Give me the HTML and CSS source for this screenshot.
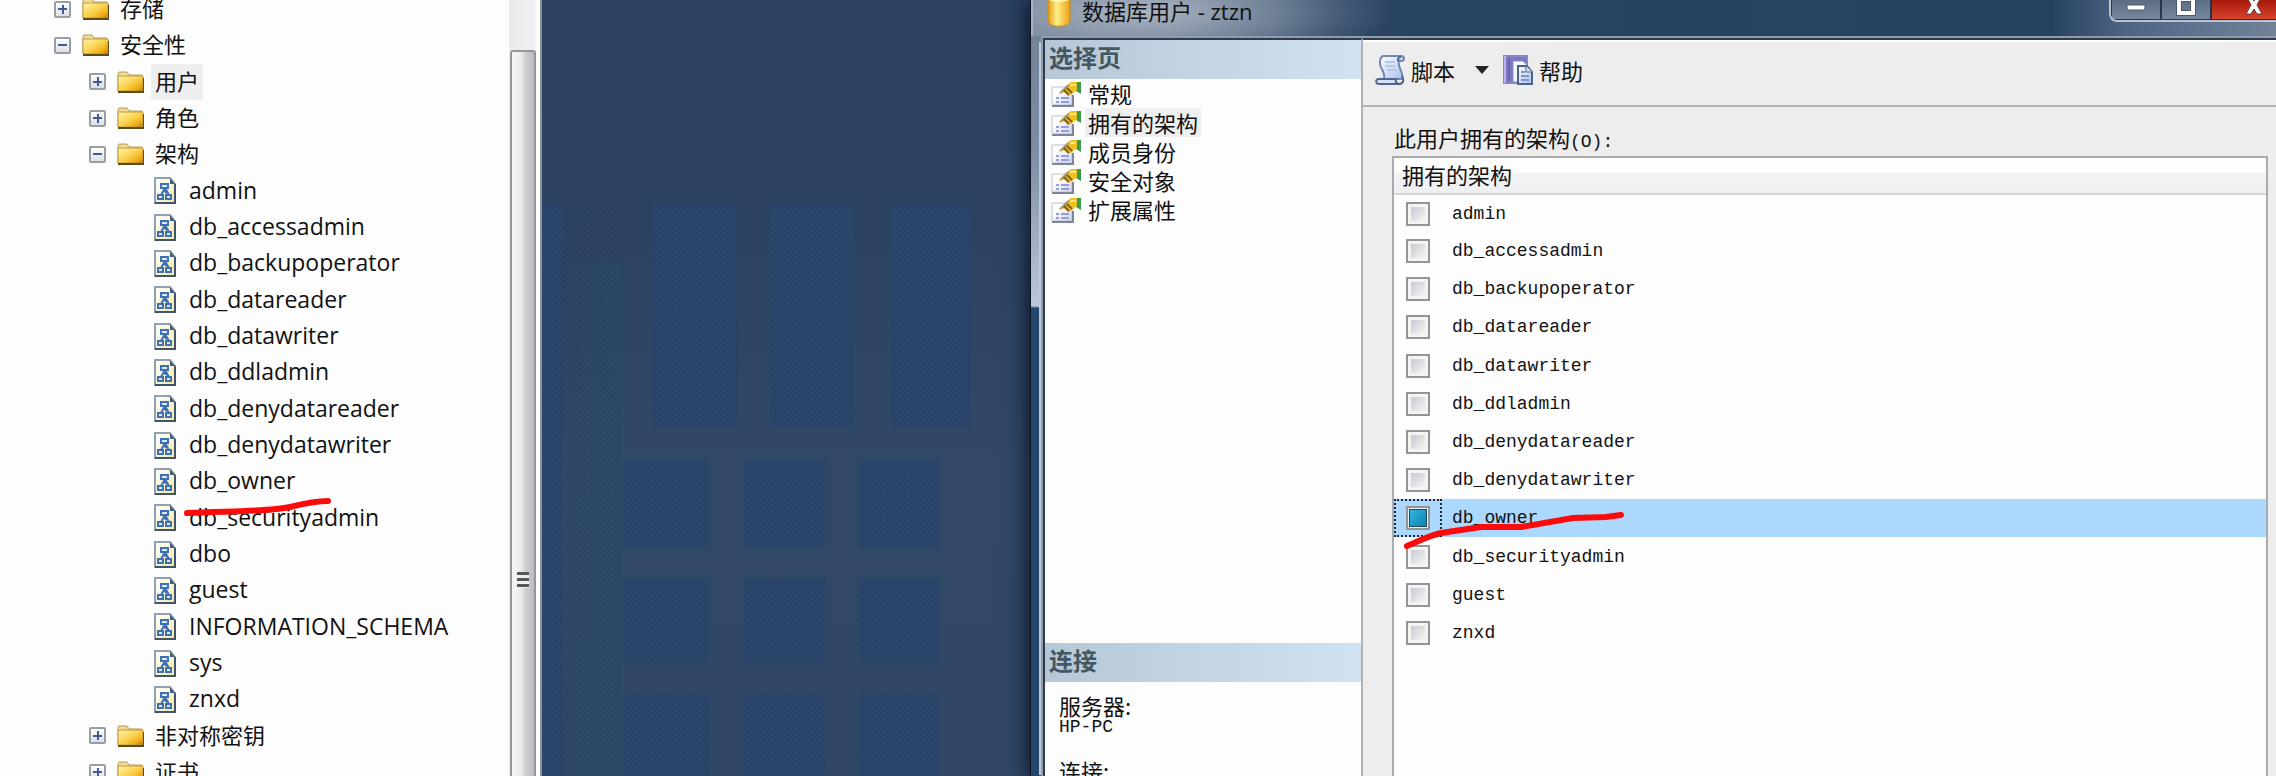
FILE: index.html
```html
<!DOCTYPE html>
<html lang="zh-CN">
<head>
<meta charset="UTF-8">
<meta name="viewport" content="width=device-width, initial-scale=1.0">
<title>数据库用户 - ztzn</title>
<link rel="stylesheet" href="styles.css">
</head>
<body>

<!-- shared icons -->
<svg class="defs" width="0" height="0" aria-hidden="true">
    <defs>
        <linearGradient id="gold" x1="0" y1="0" x2="1" y2="1">
            <stop offset="0" stop-color="#fff3a8"/>
            <stop offset="0.5" stop-color="#fbd250"/>
            <stop offset="0.8" stop-color="#eeaa10"/>
            <stop offset="1" stop-color="#a87408"/>
        </linearGradient>
        <linearGradient id="page" x1="0" y1="0" x2="1" y2="1">
            <stop offset="0" stop-color="#ffffff"/>
            <stop offset="1" stop-color="#f3e9a4"/>
        </linearGradient>
        <linearGradient id="sheet" x1="0" y1="0" x2="1" y2="1">
            <stop offset="0" stop-color="#ffffff"/>
            <stop offset="1" stop-color="#a9bfe8"/>
        </linearGradient>
        <linearGradient id="paper" x1="0" y1="0" x2="1" y2="1">
            <stop offset="0.3" stop-color="#ffffff"/>
            <stop offset="1" stop-color="#ccd4f2"/>
        </linearGradient>
        <linearGradient id="drum" x1="0" y1="0" x2="1" y2="0">
            <stop offset="0" stop-color="#e09a10"/>
            <stop offset="0.4" stop-color="#fff08a"/>
            <stop offset="1" stop-color="#e8a010"/>
        </linearGradient>
    </defs>
    <symbol id="folder" viewBox="0 0 27 22">
        <path d="M1 20V3l1-2h8l2 3h13v16z" fill="#f0dc98" stroke="#b59b58"/>
        <path d="M1 5h25v15H1z" fill="url(#gold)" stroke="#c39a3c"/>
        <path d="M1 21h26V7" fill="none" stroke="#5b4a1c" stroke-width="2"/>
    </symbol>
    <symbol id="schema" viewBox="0 0 22 27">
        <path d="M1 1h15l5 6v19H1z" fill="url(#page)" stroke="#8fa1b2" stroke-width="2"/>
        <path d="M16 1v6h5z" fill="#46607c"/>
        <path d="M21 7v19H1" fill="none" stroke="#43546a" stroke-width="2"/>
        <path d="M11 11l-4 7M11 11l4 7M9 13l4 3" fill="none" stroke="#3f6fb5" stroke-width="2"/>
        <path d="M7 7h7v4H7zM4 18h5v4H4zM12 18h5v4h-5z" fill="#d9ebff" stroke="#3f6fb5" stroke-width="2"/>
    </symbol>
    <symbol id="props" viewBox="0 0 30 26">
        <path d="M1 6h20v18H1z" fill="url(#paper)" stroke="#bcc0cc"/>
        <path d="M1 25h21V14" fill="none" stroke="#80849a" stroke-width="2"/>
        <path d="M5 17h3M5 21h3M10 17h8M10 21h8" stroke="#989dd6" stroke-width="2"/>
        <path d="M25 1h5v12l-5-3z" fill="#3b9a48"/>
        <path d="M8 12l8-8 4-3h6v8l-5 4-4 2-4-4-4 2z" fill="#f2c01d"/>
        <path d="M8 12l8-8 3-1-5 8z" fill="#a39668"/>
        <path d="M13 9l5 5M16 7l5 5" stroke="#7d6218" stroke-width="2"/>
        <path d="M19 4h6" stroke="#ffe680" stroke-width="2"/>
    </symbol>
</svg>

<main class="screen">

    <section class="explorer">
        <ul class="tree">
            <li class="l1"><button class="exp plus" aria-label="展开"></button><svg class="folder"><use href="#folder"/></svg><span>存储</span></li>
            <li class="l1"><button class="exp" aria-label="折叠"></button><svg class="folder"><use href="#folder"/></svg><span>安全性</span></li>
            <li class="l2"><button class="exp plus" aria-label="展开"></button><svg class="folder"><use href="#folder"/></svg><span class="picked">用户</span></li>
            <li class="l2"><button class="exp plus" aria-label="展开"></button><svg class="folder"><use href="#folder"/></svg><span>角色</span></li>
            <li class="l2"><button class="exp" aria-label="折叠"></button><svg class="folder"><use href="#folder"/></svg><span>架构</span></li>
            <li class="l3"><svg class="schema"><use href="#schema"/></svg><span>admin</span></li>
            <li class="l3"><svg class="schema"><use href="#schema"/></svg><span>db_accessadmin</span></li>
            <li class="l3"><svg class="schema"><use href="#schema"/></svg><span>db_backupoperator</span></li>
            <li class="l3"><svg class="schema"><use href="#schema"/></svg><span>db_datareader</span></li>
            <li class="l3"><svg class="schema"><use href="#schema"/></svg><span>db_datawriter</span></li>
            <li class="l3"><svg class="schema"><use href="#schema"/></svg><span>db_ddladmin</span></li>
            <li class="l3"><svg class="schema"><use href="#schema"/></svg><span>db_denydatareader</span></li>
            <li class="l3"><svg class="schema"><use href="#schema"/></svg><span>db_denydatawriter</span></li>
            <li class="l3"><svg class="schema"><use href="#schema"/></svg><span>db_owner</span>
                <svg class="mark mark-tree" viewBox="0 0 150 20" aria-hidden="true"><path d="M3 15C40 13 85 14 106 9C122 5 132 3 144 3"/></svg>
            </li>
            <li class="l3"><svg class="schema"><use href="#schema"/></svg><span>db_securityadmin</span></li>
            <li class="l3"><svg class="schema"><use href="#schema"/></svg><span>dbo</span></li>
            <li class="l3"><svg class="schema"><use href="#schema"/></svg><span>guest</span></li>
            <li class="l3"><svg class="schema"><use href="#schema"/></svg><span>INFORMATION_SCHEMA</span></li>
            <li class="l3"><svg class="schema"><use href="#schema"/></svg><span>sys</span></li>
            <li class="l3"><svg class="schema"><use href="#schema"/></svg><span>znxd</span></li>
            <li class="l2"><button class="exp plus" aria-label="展开"></button><svg class="folder"><use href="#folder"/></svg><span>非对称密钥</span></li>
            <li class="l2"><button class="exp plus" aria-label="展开"></button><svg class="folder"><use href="#folder"/></svg><span>证书</span></li>
        </ul>
        <div class="scrollbar">
            <div class="thumb"><i class="grip"></i></div>
        </div>
    </section>

    <section class="desktop">
        <svg class="wallpaper" viewBox="0 0 488 776" preserveAspectRatio="xMinYMin slice" aria-hidden="true">
            <defs>
                <pattern id="dots" width="6" height="6" patternUnits="userSpaceOnUse">
                    <path d="M0 0h2v2H0zM3 3h2v2H3z" fill="#1f3a5e" opacity="0.35"/>
                </pattern>
                <linearGradient id="haze" x1="0" y1="0" x2="1" y2="0">
                    <stop offset="0" stop-color="#2b4a64" stop-opacity="0.2"/>
                    <stop offset="1" stop-color="#2b4a64" stop-opacity="0.8"/>
                </linearGradient>
            </defs>
            <path d="M24 260h55v516H24z" fill="url(#haze)"/>
            <g fill="#2b456b">
                <path d="M0 203h20v573H0zM110 203h84v221h-84zM226 203h84v221h-84zM347 203h79v221h-79z"/>
                <path d="M81 457h85v87H81zM201 457h80v87h-80zM315 457h80v87h-80z"/>
                <path d="M81 575h85v83H81zM201 575h80v83h-80zM315 575h80v83h-80z"/>
                <path d="M81 690h85v86H81zM201 690h80v86h-80zM315 690h80v86h-80z"/>
            </g>
            <g fill="url(#dots)">
                <path d="M0 203h79v573H0zM110 203h84v221h-84zM226 203h84v221h-84zM347 203h79v221h-79z"/>
                <path d="M81 457h85v87H81zM201 457h80v87h-80zM315 457h80v87h-80z"/>
                <path d="M81 575h85v83H81zM201 575h80v83h-80zM315 575h80v83h-80z"/>
                <path d="M81 690h85v86H81zM201 690h80v86h-80zM315 690h80v86h-80z"/>
            </g>
        </svg>
    </section>

    <section class="dialog">
        <header class="titlebar">
            <svg class="db" viewBox="0 0 24 34"><path d="M1 5v23c0 7 22 7 22 0V5z" fill="url(#drum)" stroke="#c98a14"/><ellipse cx="12" cy="5" rx="11" ry="4" fill="#fff3b0"/></svg>
            <h1>数据库用户 - ztzn</h1>
            <div class="winbtns">
                <button aria-label="最小化"><svg width="20" height="7"><path d="M1 1h18v5H1z" fill="#fff" stroke="#4d5666"/></svg></button>
                <button aria-label="最大化"><svg width="20" height="20"><path d="M3 3h14v14H3z" fill="none" stroke="#4d5666" stroke-width="6"/><path d="M3 3h14v14H3z" fill="none" stroke="#fff" stroke-width="4"/></svg></button>
                <button class="close" aria-label="关闭"><svg width="20" height="20"><path d="M3 1h5l2 4 2-4h5l-4 8 5 9h-5l-3-5-3 5H2l5-9z" fill="#fff" stroke="#6b3a3a"/></svg></button>
            </div>
        </header>

        <div class="client">
            <aside class="sidebar">
                <h2>选择页</h2>
                <ul class="pages">
                    <li><svg><use href="#props"/></svg><a href="#">常规</a></li>
                    <li><svg><use href="#props"/></svg><a href="#" class="current">拥有的架构</a></li>
                    <li><svg><use href="#props"/></svg><a href="#">成员身份</a></li>
                    <li><svg><use href="#props"/></svg><a href="#">安全对象</a></li>
                    <li><svg><use href="#props"/></svg><a href="#">扩展属性</a></li>
                </ul>
                <h2>连接</h2>
                <dl class="conn">
                    <dt>服务器:</dt>
                    <dd>HP-PC</dd>
                    <dt>连接:</dt>
                </dl>
            </aside>

            <div class="content">
                <div class="toolbar">
                    <button>
                        <svg viewBox="0 0 30 30">
                            <path d="M8 1h18c4 0 4 5 0 5h-2c-2 6 5 11 3 18H9c2-7-5-11-4-17 0-3 1-5 3-6z" fill="url(#sheet)" stroke="#7186b5" stroke-width="2"/>
                            <path d="M24 6c-2-1-1-4 2-4" fill="none" stroke="#4f648f" stroke-width="2"/>
                            <path d="M10 7h10M10 11h10M12 15h10" stroke="#b5c6ea" stroke-width="2"/>
                            <path d="M3 24h18c-1 3 1 5 4 5H4c-3 0-4-4-1-5z" fill="#d5e0f7" stroke="#4f648f" stroke-width="2"/>
                            <path d="M25 29c4-1 4-5 2-8" fill="none" stroke="#4f648f" stroke-width="2"/>
                        </svg>
                        脚本
                    </button>
                    <button class="drop" aria-label="脚本选项"><svg width="14" height="8"><path d="M0 0h14L7 8z" fill="#222"/></svg></button>
                    <button>
                        <svg viewBox="0 0 30 30">
                            <path d="M1 1h23v27H1z" fill="#7d77c4" stroke="#8a85c8" stroke-width="2"/>
                            <path d="M2 1v27" stroke="#b9b5e8" stroke-width="2"/>
                            <path d="M6 3v22" stroke="#5c559f"/>
                            <path d="M10 6h10l4 4v17H10z" fill="#f5f8ff" stroke="#8791bd"/>
                            <path d="M15 11h9l5 6v12H15z" fill="url(#sheet)" stroke="#4c648c" stroke-width="2"/>
                            <path d="M23 11v6h6" fill="#dce8ff" stroke="#4c648c"/>
                            <path d="M18 17h4M18 21h8M18 25h8" stroke="#7a97c8" stroke-width="2"/>
                        </svg>
                        帮助
                    </button>
                </div>

                <p class="caption">此用户拥有的架构<span class="mono">(O):</span></p>
                <div class="grid">
                    <table>
                        <thead>
                            <tr><th colspan="2">拥有的架构</th></tr>
                        </thead>
                        <tbody>
                            <tr><td><input type="checkbox" id="s1"></td><td><label for="s1">admin</label></td></tr>
                            <tr><td><input type="checkbox" id="s2"></td><td><label for="s2">db_accessadmin</label></td></tr>
                            <tr><td><input type="checkbox" id="s3"></td><td><label for="s3">db_backupoperator</label></td></tr>
                            <tr><td><input type="checkbox" id="s4"></td><td><label for="s4">db_datareader</label></td></tr>
                            <tr><td><input type="checkbox" id="s5"></td><td><label for="s5">db_datawriter</label></td></tr>
                            <tr><td><input type="checkbox" id="s6"></td><td><label for="s6">db_ddladmin</label></td></tr>
                            <tr><td><input type="checkbox" id="s7"></td><td><label for="s7">db_denydatareader</label></td></tr>
                            <tr><td><input type="checkbox" id="s8"></td><td><label for="s8">db_denydatawriter</label></td></tr>
                            <tr class="selected">
                                <td class="focus"><input type="checkbox" id="s9" checked></td>
                                <td><label for="s9">db_owner</label></td>
                            </tr>
                            <tr><td class="under"><input type="checkbox" id="s10">
                                <svg class="mark mark-grid" viewBox="0 0 222 38" aria-hidden="true"><path d="M4 34C18 28 28 23 38 21L78 15H118L170 6L203 5L218 3"/></svg>
                            </td><td><label for="s10">db_securityadmin</label></td></tr>
                            <tr><td><input type="checkbox" id="s11"></td><td><label for="s11">guest</label></td></tr>
                            <tr><td><input type="checkbox" id="s12"></td><td><label for="s12">znxd</label></td></tr>
                        </tbody>
                    </table>
                </div>
            </div>
        </div>
    </section>

</main>

</body>
</html>
```
FILE: styles.css
```css
* {
    box-sizing: border-box;
}

body {
    margin: 0;
    overflow: hidden;
    font-family: "Noto Sans CJK SC", sans-serif;
    font-size: 22px;
    color: #111;
    background-color: #fdfdfd;
}

ul, dl, dd, h1, h2, p {
    margin: 0;
    padding: 0;
    list-style: none;
}

button {
    border: none;
    padding: 0;
    background: none;
    font: inherit;
    color: inherit;
}

svg {
    display: block;
    flex: none;
}

.defs {
    position: absolute;
}

.mono, label, .conn dd {
    font-family: "Liberation Mono", monospace;
    font-size: 18px;
}

.screen {
    display: grid;
    grid-template-columns: 542fr 488fr 1246fr;
    height: 100vh;
    overflow: hidden;
}

/* object explorer */
.explorer {
    display: flex;
    min-width: 0;
    overflow: hidden;
    border-right: 2px solid #8d9299;
}

.tree {
    flex: 1;
    margin-top: -9px;
    font-family: "Open Sans", "Noto Sans CJK SC", sans-serif;
    line-height: 36px;
    white-space: nowrap;
}

.tree li {
    display: flex;
    align-items: center;
    position: relative;
    height: 36px;
}

.tree li:nth-child(3n) {
    height: 37px;
}

.l1 {
    padding-left: 54px;
}

.l2 {
    padding-left: 89px;
}

.l3 {
    padding-left: 154px;
    font-size: 23px;
}

.tree span {
    padding: 0 4px 2px;
    margin-left: 7px;
    line-height: 34px;
}

.tree .l3 span {
    margin-left: 9px;
}

.tree .picked {
    background-color: #eee;
}

.exp {
    width: 17px;
    height: 17px;
    margin-right: 11px;
    border: 2px solid #9a9da3;
    border-radius: 2px;
    background: linear-gradient(#3f5c96, #3f5c96) center / 9px 2px no-repeat, linear-gradient(#fff, #dcdfe4);
}

.exp.plus {
    background: linear-gradient(#3f5c96, #3f5c96) center / 9px 2px no-repeat, linear-gradient(#3f5c96, #3f5c96) center / 2px 9px no-repeat, linear-gradient(#fff, #dcdfe4);
}

.folder {
    width: 27px;
    height: 22px;
}

.schema {
    width: 22px;
    height: 27px;
}

.scrollbar {
    width: 31px;
    padding: 50px 4px 0 1px;
    background: linear-gradient(90deg, #ebebeb, #f0f0f0 26px, #fdfdfd 27px);
}

.thumb {
    display: flex;
    justify-content: center;
    height: 1050px;
    padding-top: 520px;
    border: 2px solid #96979b;
    border-radius: 3px;
    background: linear-gradient(90deg, #f6f6f6, #ececec 40%, #cfcfd2 60%, #bcbcc1);
}

.grip {
    width: 12px;
    height: 16px;
    background: repeating-linear-gradient(#55565a 0 3px, #eee 3px 6px);
}

/* red pen */
.mark {
    position: absolute;
    fill: none;
    stroke: #fb0b0b;
    stroke-width: 6;
    stroke-linecap: round;
    z-index: 2;
}

.mark-tree {
    left: 184px;
    top: 35px;
    width: 150px;
    height: 20px;
}

.mark-grid {
    left: 9px;
    top: -25px;
    width: 222px;
    height: 38px;
}

/* desktop */
.desktop {
    overflow: hidden;
    background: linear-gradient(#2a4160, #2d4362 30%, #324867 60%, #304766);
}

.wallpaper {
    width: 100%;
    height: 100%;
}

/* dialog window */
.dialog {
    position: relative;
    display: flex;
    flex-direction: column;
    min-width: 0;
    border-left: 1px solid #0c1524;
    box-shadow: -2px 0 20px rgba(0, 5, 20, 0.8);
    background: linear-gradient(#718097, #74849b 50px, #7d8ca4 150px, #bcc7da 306px, #25466b 308px);
}

.titlebar {
    display: flex;
    height: 36px;
    border-left: 2px solid #a5b3c4;
    padding-left: 14px;
    background:
        radial-gradient(250px 60px at 110px 12px, rgba(178, 187, 200, 0.9), rgba(150, 163, 180, 0.6) 50%, rgba(130, 145, 165, 0)),
        linear-gradient(90deg, #6c7c92, #5f7189 10%, #2b4563 24%, #25435f 50%, #27425f 82%, #4d6685 88%, #738197);
}

.titlebar h1 {
    flex: 1;
    margin-left: 11px;
    font-family: "Open Sans", "Noto Sans CJK SC", sans-serif;
    font-size: 22px;
    font-weight: normal;
    line-height: 22px;
}

.db {
    width: 24px;
    height: 34px;
    margin-top: -7px;
}

.winbtns {
    display: flex;
    height: 22px;
    margin-right: -23px;
    border: 2px solid #b8c3d0;
    border-top: none;
    border-bottom-left-radius: 8px;
    background: linear-gradient(#5c6c84, #7789a0);
    overflow: hidden;
}

.winbtns button {
    display: flex;
    justify-content: center;
    align-items: center;
    width: 50px;
    height: 20px;
    padding-bottom: 8px;
    border: 1px solid #27384f;
    border-top: none;
}

.winbtns button:first-child {
    padding: 0 0 4px;
}

.winbtns .close {
    width: 86px;
    border-color: #5c1512;
    background: linear-gradient(#a8180c, #d8442c);
}

.client {
    flex: 1;
    display: flex;
    min-height: 0;
    margin-left: 10px;
    border: 2px solid #8d9cae;
    border-width: 2px 0 0 2px;
    box-shadow: -8px 0 0 -6px #c0cad6;
    background-color: #ededed;
}

.sidebar {
    width: 320px;
    border: solid #2e3b4c;
    border-width: 2px 0 0 2px;
    border-right: 2px solid #b0b2b5;
    background-color: #fdfdfd;
}

.sidebar h2 {
    height: 39px;
    padding-left: 4px;
    font-size: 24px;
    line-height: 34px;
    color: #44565f;
    background: linear-gradient(90deg, #b6c7d7, #d1e2f0);
}

.pages {
    height: 564px;
}

.pages li {
    display: flex;
    align-items: center;
    height: 29px;
    padding-left: 6px;
}

.pages svg {
    width: 30px;
    height: 26px;
}

.pages a {
    margin-left: 4px;
    padding: 0 3px;
    line-height: 29px;
    color: #111;
    text-decoration: none;
}

.pages a.current {
    background-color: #efefef;
}

.conn {
    padding: 12px 14px 0;
    line-height: 22px;
}

.conn dd {
    margin-bottom: 21px;
}

.content {
    flex: 1;
    display: flex;
    flex-direction: column;
    min-width: 0;
    border-top: 2px solid #2e3b4c;
}

.toolbar {
    display: flex;
    align-items: center;
    height: 67px;
    padding: 0 0 8px 12px;
    border-top: 2px solid #fff;
    border-bottom: 2px solid #b3b3b3;
}

.toolbar button {
    display: flex;
    align-items: center;
    gap: 6px;
}

.toolbar button svg {
    width: 30px;
    height: 30px;
}

.toolbar .drop {
    padding: 0 14px 0 20px;
}

.toolbar .drop svg {
    width: 14px;
    height: 8px;
}

.caption {
    padding: 16px 0 0 31px;
    line-height: 28px;
}

.grid {
    flex: 1;
    margin: 0 8px 0 29px;
    border: 2px solid #a8abaf;
    border-bottom: none;
    background-color: #fdfdfd;
}

table {
    width: 100%;
    border-collapse: collapse;
}

th {
    height: 36px;
    padding: 0 0 4px 8px;
    border-bottom: 2px solid #d5d5d5;
    font-weight: normal;
    line-height: 30px;
    text-align: left;
    background: linear-gradient(#fdfdfd 40%, #f1f3f5 45%, #eeeff1);
}

tbody tr {
    height: 38px;
}

tbody tr:nth-child(5n) {
    height: 39px;
}

td {
    padding: 0;
    line-height: 36px;
}

td:first-child {
    width: 48px;
    padding-left: 12px;
}

td label {
    display: block;
    padding-left: 10px;
}

.selected {
    background-color: #add8fe;
}

.focus {
    outline: 2px dotted #1b2b3d;
    outline-offset: -2px;
}

.under {
    position: relative;
}

td input {
    appearance: none;
    display: block;
    width: 24px;
    height: 24px;
    margin: 0;
    border: 2px solid #939496;
    background: linear-gradient(135deg, #c6cad2, #f4f4f4) content-box, #f4f4f4;
    padding: 3px;
}

td input:checked {
    background: linear-gradient(135deg, #35b5dc, #0a84b4) content-box, #1d4b66;
    padding: 2px;
    box-shadow: inset 0 0 0 1px #e8f4fa;
}
```
